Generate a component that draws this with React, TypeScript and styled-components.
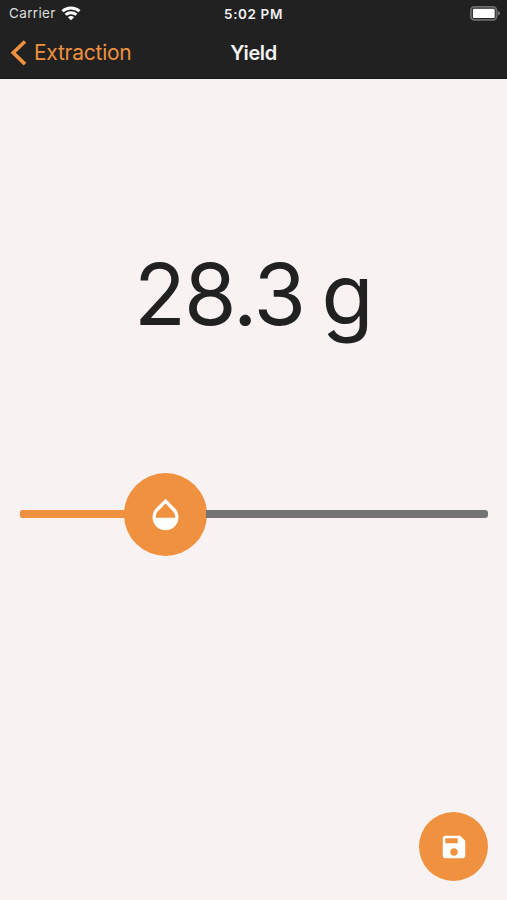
import React from "react";
import styled, { createGlobalStyle } from "styled-components";

const ACCENT = "#ef913e";
const INK = "#212121";

const GlobalStyle = createGlobalStyle`
  * { box-sizing: border-box; }
  body { margin: 0; background: #f8f2f2; }
`;

const Screen = styled.div`
  width: 507px;
  height: 900px;
  display: flex;
  flex-direction: column;
  overflow: hidden;
  background: #f8f2f2;
  color: ${INK};
  font-family: Inter, "Liberation Sans", sans-serif;
`;

const Header = styled.header`
  height: 79px;
  flex: none;
  background: ${INK};
  border-bottom: 1px solid #171717;
  color: #fff;
`;

const StatusBar = styled.div`
  height: 27px;
  padding: 0 7px 0 9px;
  display: grid;
  grid-template-columns: 1fr auto 1fr;
  align-items: center;
  font-size: 13.5px;
  line-height: 27px;
`;

const Carrier = styled.div`
  display: flex;
  align-items: center;
  gap: 5px;
  color: #dedede;
  letter-spacing: 0.35px;
  svg { display: block; }
`;

const Clock = styled.div`
  font-weight: 600;
  font-size: 13.5px;
  letter-spacing: 0.6px;
  padding: 1px 2px 0 0;
  line-height: 26px;
  color: #f1f1f1;
`;

const BatterySlot = styled.div`
  display: flex;
  justify-content: flex-end;
`;

const NavBar = styled.nav`
  height: 51px;
  padding: 0 10px;
  display: grid;
  grid-template-columns: 1fr auto 1fr;
  align-items: center;
`;

const BackButton = styled.button`
  display: flex;
  align-items: center;
  gap: 7px;
  padding: 0;
  border: 0;
  background: none;
  color: ${ACCENT};
  font: 400 21px/50px Inter, sans-serif;
  letter-spacing: -0.25px;
`;

const Title = styled.h1`
  margin: 0;
  font-size: 20px;
  font-weight: 600;
  line-height: 50px;
  letter-spacing: -0.4px;
  color: #f4f4f4;
`;

const Content = styled.main`
  flex: 1;
  display: flex;
  flex-direction: column;
  padding: 164px 19px 19px 20px;
`;

const Reading = styled.div`
  height: 104px;
  padding-right: 2px;
  line-height: 104px;
  font-size: 85px;
  font-weight: 430;
  text-align: center;
  white-space: pre;
  letter-spacing: -1.7px;
  word-spacing: -5px;
`;

const Slider = styled.div`
  margin-top: 125px;
  height: 84px;
  display: flex;
  align-items: center;
`;

const Track = styled.div<{ $filled?: boolean }>`
  height: 8px;
  flex: ${(p) => (p.$filled ? "0 0 105px" : "1")};
  background: ${(p) => (p.$filled ? ACCENT : "#747373")};
  border-radius: ${(p) => (p.$filled ? "2px 0 0 2px" : "0 3px 3px 0")};
`;

const RoundButton = styled.button<{ $size: number }>`
  flex: none;
  width: ${(p) => p.$size}px;
  height: ${(p) => p.$size}px;
  padding: 0;
  border: 0;
  border-radius: 50%;
  display: flex;
  align-items: center;
  justify-content: center;
  background: ${ACCENT};
  color: #fff;
`;

const Thumb = styled(RoundButton)`
  margin: 0 -1px;
`;

const Footer = styled.footer`
  margin-top: auto;
  display: flex;
  justify-content: flex-end;
`;

const WifiIcon = () => (
  <svg width="20" height="15" viewBox="0 0 20 15" fill="none" stroke="#fff" strokeWidth="2.9">
    <path d="M1.5 5.3C6.2 0.8 13.8 0.8 18.5 5.3" />
    <path d="M4.6 8.8C7.6 6 12.4 6 15.4 8.8" />
    <path d="M10 14.3L6.9 11.2C8.7 9.6 11.3 9.6 13.1 11.2Z" fill="#fff" stroke="none" />
  </svg>
);

const BatteryIcon = () => (
  <svg width="30" height="15" viewBox="0 0 30 15">
    <rect x="0.9" y="0.9" width="25.6" height="13" rx="3.4" fill="none" stroke="#6c6c6c" strokeWidth="1.8" />
    <rect x="2.9" y="2.7" width="21.8" height="9.4" rx="1.2" fill="#fff" />
    <path d="M27.8 5C31 6 31 8.6 27.8 9.6Z" fill="#757575" />
  </svg>
);

const ChevronIcon = () => (
  <svg width="17" height="26" viewBox="0 0 17 26" fill="none" stroke="currentColor" strokeWidth="3.6">
    <path d="M15 1.5L3.2 12.8L15 24.1" />
  </svg>
);

const DropIcon = () => (
  <svg width="39" height="39" viewBox="0 0 24 24" fill="currentColor">
    <path d="M17.66 8L12 2.35 6.34 8C4.78 9.56 4 11.64 4 13.64s.78 4.11 2.34 5.67 3.61 2.35 5.66 2.35 4.1-.79 5.66-2.35S20 15.64 20 13.64 19.22 9.56 17.66 8zM6 14c.01-2 .62-3.27 1.76-4.4L12 5.27l4.24 4.38C17.38 10.77 17.99 12 18 14H6z" />
  </svg>
);

const SaveIcon = () => (
  <svg width="30" height="30" viewBox="0 0 24 24" fill="currentColor">
    <path d="M17 3H5c-1.11 0-2 .9-2 2v14c0 1.1.89 2 2 2h14c1.1 0 2-.9 2-2V7l-4-4zm-5 16c-1.66 0-3-1.34-3-3s1.34-3 3-3 3 1.34 3 3-1.34 3-3 3zm3-10H5V5h10v4z" />
  </svg>
);

export default function App() {
  return (
    <Screen>
      <GlobalStyle />
      <Header>
        <StatusBar>
          <Carrier>
            Carrier
            <WifiIcon />
          </Carrier>
          <Clock>5:02 PM</Clock>
          <BatterySlot>
            <BatteryIcon />
          </BatterySlot>
        </StatusBar>
        <NavBar>
          <BackButton>
            <ChevronIcon />
            Extraction
          </BackButton>
          <Title>Yield</Title>
        </NavBar>
      </Header>
      <Content>
        <Reading>28.3 g</Reading>
        <Slider>
          <Track $filled />
          <Thumb $size={83} aria-label="Yield">
            <DropIcon />
          </Thumb>
          <Track />
        </Slider>
        <Footer>
          <RoundButton $size={69} aria-label="Save">
            <SaveIcon />
          </RoundButton>
        </Footer>
      </Content>
    </Screen>
  );
}
